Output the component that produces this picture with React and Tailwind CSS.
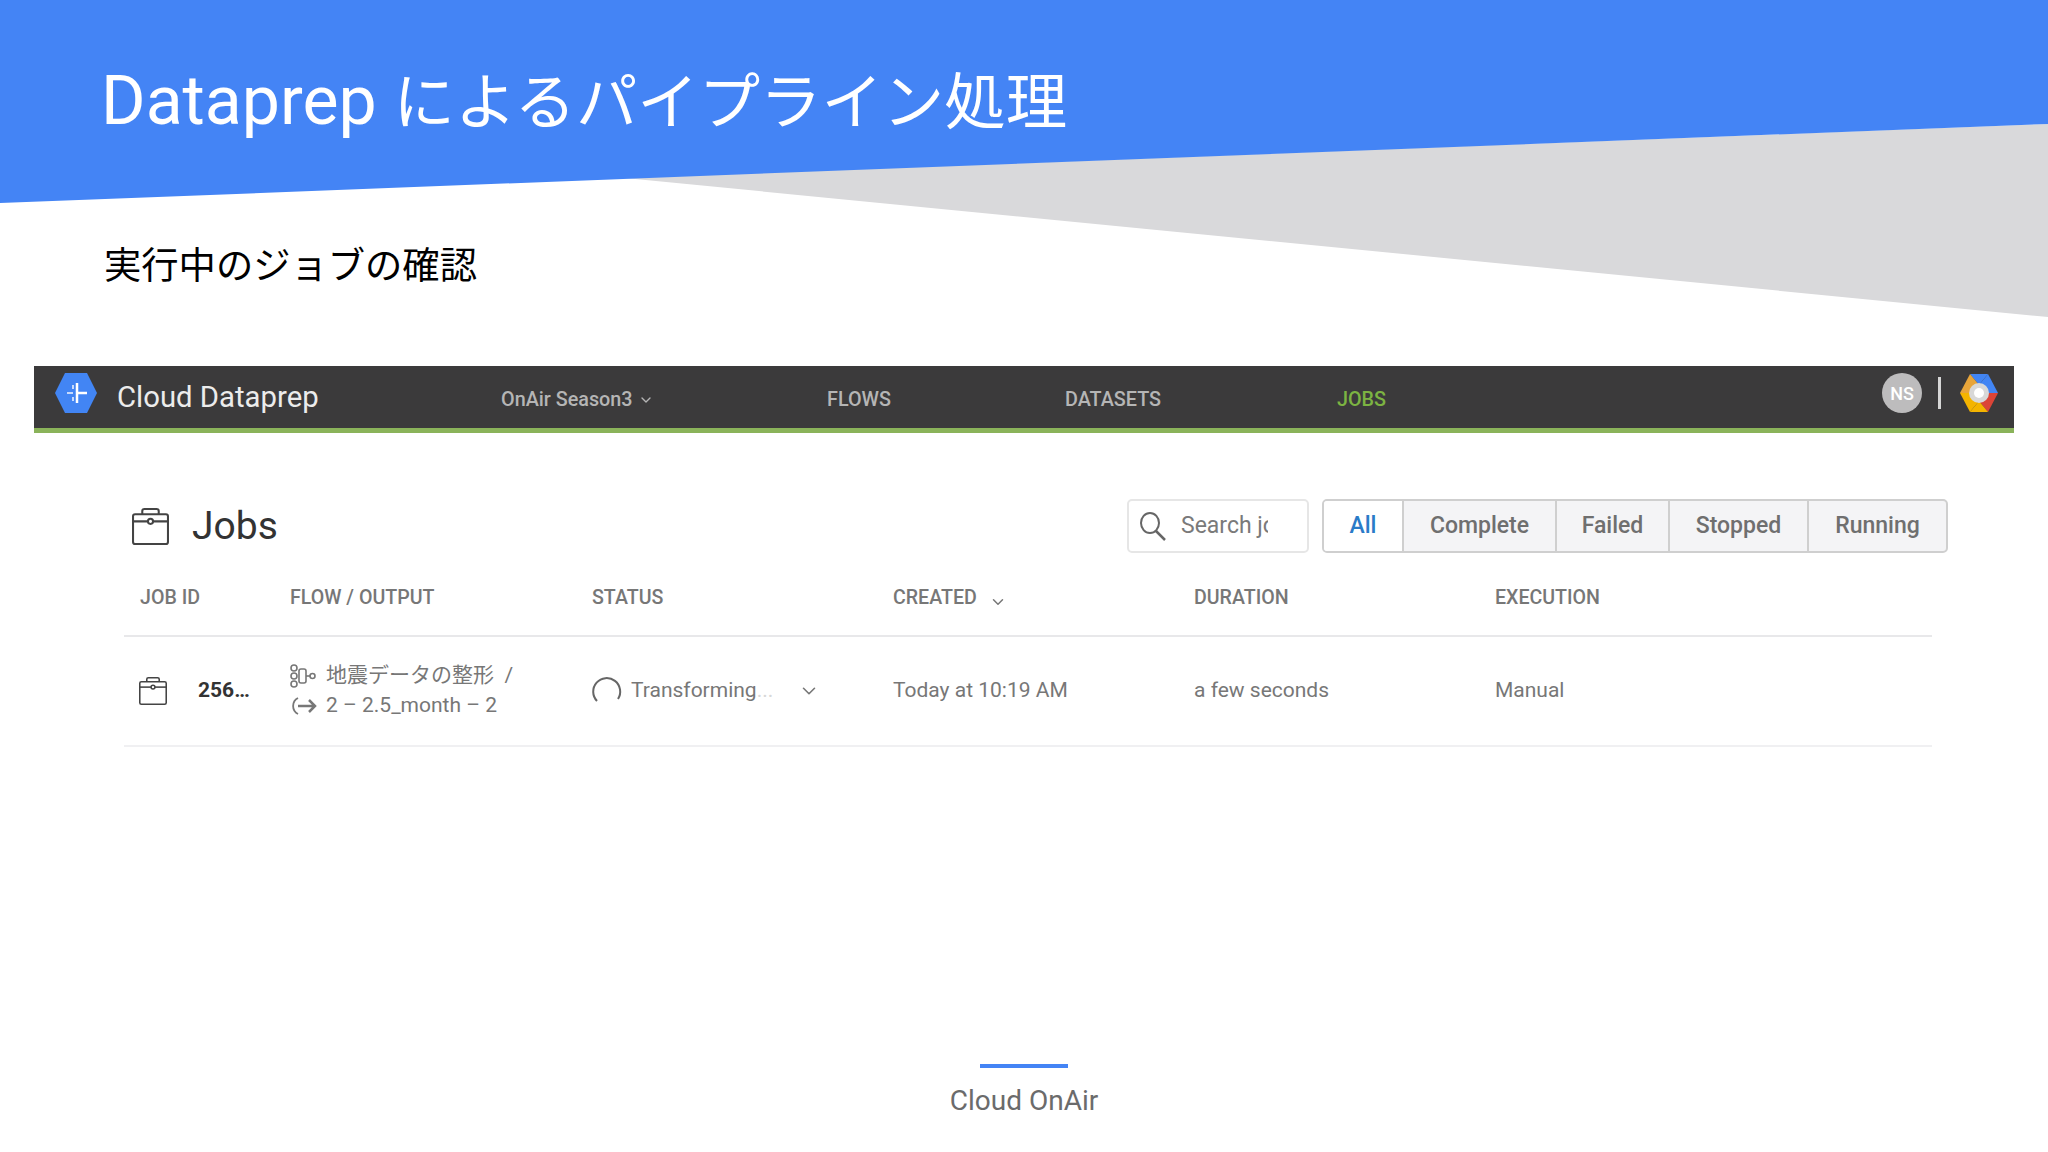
import { ChevronDown } from 'lucide-react';

const fontStack = 'font-["Roboto","Noto_Sans_CJK_JP",sans-serif]';

const JobIcon = ({ className }) => (
  <svg viewBox="0 0 36 36" fill="none" stroke="currentColor" strokeWidth="2" className={className}>
    <rect x="1" y="6" width="34" height="29" rx="2" />
    <path d="M1 13h34" />
    <path d="M10 6V3a2 2 0 0 1 2-2h12a2 2 0 0 1 2 2v3" />
    <circle cx="18" cy="13" r="2.5" fill="#fff" />
  </svg>
);

const SearchIcon = () => (
  <svg viewBox="0 0 30 30" fill="none" stroke="#666" strokeWidth="2" className="w-[30px] h-[30px] shrink-0">
    <ellipse cx="12" cy="12" rx="9" ry="10" />
    <path d="M18 20l9 9" strokeWidth="2.5" />
  </svg>
);

const DataprepLogo = () => (
  <svg viewBox="0 0 42 40" className="w-[42px] h-[40px] shrink-0">
    <polygon points="10,0 32,0 42,20 32,40 10,40 0,20" fill="#4285f4" />
    <path d="M22 10v20M22 20h10" stroke="#fff" strokeWidth="2.5" />
    <path d="M18 12v4M18 24v4M12 20h6" stroke="#c6d9fb" strokeWidth="2" />
  </svg>
);

const CloudLogo = () => (
  <svg viewBox="0 0 38 40" className="w-[38px] h-[40px] shrink-0">
    <polygon points="10,1 28,1 19,12" fill="#4285f4" />
    <polygon points="28,1 38,20 28,20 19,12" fill="#4285f4" />
    <polygon points="38,20 28,39 19,28 28,20" fill="#db4437" />
    <polygon points="28,39 10,39 19,28" fill="#f4b400" />
    <polygon points="10,39 0,20 10,20 19,28" fill="#f4b400" />
    <polygon points="0,20 10,1 19,12 10,20" fill="#e8a53a" />
    <circle cx="19" cy="20" r="10" fill="#d8d8d8" />
    <circle cx="19" cy="20" r="5" fill="#fff" />
  </svg>
);

const FlowIcon = () => (
  <svg viewBox="0 0 26 24" fill="none" stroke="currentColor" strokeWidth="1.6" className="w-[26px] h-[24px] shrink-0">
    <circle cx="4" cy="4" r="3" />
    <circle cx="4" cy="12" r="3" />
    <circle cx="4" cy="20" r="3" />
    <rect x="9" y="5" width="7" height="14" rx="2" />
    <path d="M16 12h4" />
    <circle cx="22.5" cy="12" r="2.5" />
  </svg>
);

const OutputIcon = () => (
  <svg viewBox="0 0 28 20" fill="none" stroke="currentColor" strokeWidth="2.5" className="w-[28px] h-[20px] shrink-0">
    <path d="M8 2a9 9 0 0 0 0 16" strokeWidth="1.8" />
    <path d="M8 10h17M19 4l6 6-6 6" />
  </svg>
);

const Spinner = () => (
  <svg viewBox="0 0 30 30" fill="none" stroke="#666" strokeWidth="2" className="w-[30px] h-[30px] shrink-0">
    <path d="M5 25A13.5 13.5 0 1 1 26 23" />
  </svg>
);

const filters = [
  { label: 'All', width: 'w-[78px]', active: true },
  { label: 'Complete', width: 'w-[153px]' },
  { label: 'Failed', width: 'w-[113px]' },
  { label: 'Stopped', width: 'w-[139px]' },
  { label: 'Running', width: 'w-[139px]' },
];

const columns = ['FLOW / OUTPUT', 'STATUS', 'CREATED', 'DURATION', 'EXECUTION'];

export default function App() {
  return (
    <div className={`relative w-[2048px] h-[1152px] overflow-hidden bg-white flex flex-col ${fontStack}`}>
      {/* slide background */}
      <svg viewBox="0 0 2048 320" className="absolute left-0 top-0 w-[2048px] h-[320px]">
        <polygon points="625,178 2048,124 2048,317" fill="#d9d9db" />
        <polygon points="0,0 2048,0 2048,124 0,203" fill="#4484f5" />
      </svg>

      <header className="relative pl-[101px] pt-[55px]">
        <h1 className="text-[68px] leading-[92px] font-normal text-white whitespace-nowrap">
          Dataprep <span className="text-[61.4px]">によるパイプライン処理</span>
        </h1>
        <p className="mt-[94px] pl-[3px] text-[37.3px] leading-[46px] text-black">実行中のジョブの確認</p>
      </header>

      <nav className="relative mt-[77px] mx-[34px] h-[67px] bg-[#3b3a3b] border-b-[5px] border-[#8ab35a] flex items-center shrink-0">
        <div className="ml-[21px] -mt-[8px]"><DataprepLogo /></div>
        <span className="ml-[20px] w-[384px] text-[29.3px] text-[#ececec] mt-[1px]">Cloud Dataprep</span>
        <span className="flex items-center w-[326px] mt-[6px] text-[19.8px] font-medium text-[#b5b5b5]">
          OnAir Season3
          <ChevronDown className="w-[16px] h-[16px] ml-[5px]" />
        </span>
        <span className="w-[238px] mt-[6px] text-[19.8px] font-medium text-[#b5b5b5]">FLOWS</span>
        <span className="w-[272px] mt-[6px] text-[19.8px] font-medium text-[#b5b5b5]">DATASETS</span>
        <span className="mt-[6px] text-[19.8px] font-medium text-[#7cb342]">JOBS</span>
        <div className="ml-auto mr-[16px] -mt-[8px] flex items-center">
          <span className="w-[40px] h-[40px] rounded-full bg-[#bdbcbd] text-white text-[18px] font-medium flex items-center justify-center">NS</span>
          <span className="w-[3px] h-[32px] bg-[#d6d6d6] ml-[16px] mr-[19px]" />
          <CloudLogo />
        </div>
      </nav>

      <main className="relative pl-[124px] pr-[116px]">
        <div className="flex items-center h-[54px] mt-[66px] ml-[8px]">
          <JobIcon className="w-[37px] h-[37px] text-[#444]" />
          <h2 className="ml-[23px] text-[39px] text-[#333]">Jobs</h2>
          <div className="ml-auto w-[182px] h-[54px] border-2 border-[#e6e6e6] rounded-[5px] flex items-center pl-[9px]">
            <SearchIcon />
            <span className="ml-[13px] w-[87px] overflow-hidden whitespace-nowrap text-[23px] text-[#7a7a7a]">Search jobs</span>
          </div>
          <div className="ml-[13px] -mr-[16px] flex h-[54px] border-2 border-[#cfcfcf] rounded-[5px] overflow-hidden text-[23px] font-medium text-[#6f6f6f] bg-[#f4f4f6]">
            {filters.map((f, i) => (
              <span
                key={f.label}
                className={`${f.width} flex items-center justify-center ${i > 0 ? 'border-l-2 border-[#cfcfcf]' : ''} ${
                  f.active ? 'bg-white text-[#2a7bc8]' : ''
                }`}
              >
                {f.label}
              </span>
            ))}
          </div>
        </div>

        {/* table head */}
        <div className="mt-[19px] h-[65px] grid grid-cols-[166px_302px_301px_301px_301px_1fr] items-center border-b-2 border-[#e8e8ea] text-[19.6px] font-medium text-[#777] pb-[11px]">
          <span className="pl-[16px]">JOB ID</span>
          {columns.map((c) => (
            <span key={c} className="flex items-center">
              {c}
              {c === 'CREATED' && <ChevronDown className="w-[18px] h-[18px] ml-[12px] mt-[8px]" />}
            </span>
          ))}
        </div>

        {/* table row */}
        <div className="h-[110px] grid grid-cols-[166px_302px_301px_301px_301px_1fr] items-center border-b-2 border-[#f0f0f2] text-[21px] text-[#777]">
          <div className="flex items-center pl-[15px]">
            <JobIcon className="w-[28px] h-[28px] text-[#444]" />
            <span className="ml-[31px] font-bold text-[#333]">256…</span>
          </div>
          <div className="flex flex-col gap-[1px]">
            <div className="flex items-center h-[29px]">
              <FlowIcon />
              <span className="ml-[10px] whitespace-pre">地震データの整形  /</span>
            </div>
            <div className="flex items-center h-[29px]">
              <OutputIcon />
              <span className="ml-[8px]">2 – 2.5_month – 2</span>
            </div>
          </div>
          <div className="flex items-center">
            <Spinner />
            <span className="ml-[9px] w-[144px] whitespace-nowrap">
              Transforming<span className="text-[#d8d8d8]">...</span>
            </span>
            <ChevronDown className="w-[22px] h-[22px] ml-[23px]" strokeWidth={1.75} />
          </div>
          <span>Today at 10:19 AM</span>
          <span>a few seconds</span>
          <span>Manual</span>
        </div>
      </main>

      <footer className="mt-auto mb-[33px] flex flex-col items-center">
        <span className="w-[88px] h-[4px] bg-[#4484f5]" />
        <span className="mt-[15px] text-[28px] leading-[36px] text-[#6b6b6b]">Cloud OnAir</span>
      </footer>
    </div>
  );
}
